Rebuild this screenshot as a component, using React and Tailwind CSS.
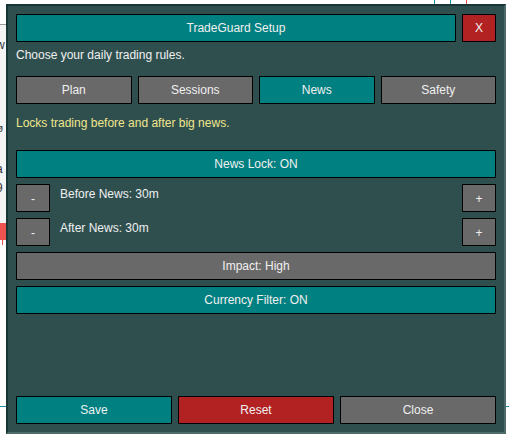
import React from 'react';

const font = { fontFamily: '"Liberation Sans", Arial, sans-serif' };

function Btn({ children, className = '' }) {
  return (
    <div
      className={`flex items-center justify-center border border-black text-[12px] text-[#f0f0f0] ${className}`}
    >
      {children}
    </div>
  );
}

function Stepper({ label }) {
  return (
    <div className="flex h-[28px] items-start">
      <Btn className="h-[28px] w-[34px] bg-[#696969] pt-[2px] text-[11px]">-</Btn>
      <span className="ml-[10px] flex-1 pt-[2px] text-[12px] leading-[16px] text-[#f0f0f0]">{label}</span>
      <Btn className="h-[28px] w-[34px] bg-[#696969] pt-[2px] text-[11px]">+</Btn>
    </div>
  );
}

export default function App() {
  const tabs = ['Plan', 'Sessions', 'News', 'Safety'];

  return (
    <div className="relative h-[440px] w-[509px] overflow-hidden bg-white" style={font}>
      {/* chart bits peeking out behind the panel */}
      <div className="absolute left-0 top-[24px] h-[199px] w-[6px] border-t border-[#9a9a9a] bg-[#f4f4f4]" />
      <span className="absolute left-[-4px] top-[36px] text-[12px] text-[#333]">w</span>
      <span className="absolute left-[-3px] top-[121px] text-[10px] text-[#333]">ø</span>
      <span className="absolute left-[-4px] top-[160px] text-[12px] text-[#333]">a</span>
      <span className="absolute left-[-4px] top-[179px] text-[12px] text-[#333]">9</span>
      <div className="absolute left-0 top-[223px] h-[17px] w-[6px] bg-[#ef5350]" />
      <div className="absolute left-[2px] top-[240px] h-[5px] w-px bg-[#ef5350]" />
      <div className="absolute left-0 top-[406px] h-px w-[6px] bg-[#1c8ea8]" />
      <div className="absolute right-0 top-[406px] h-px w-[4px] bg-[#1c8ea8]" />
      <div className="absolute left-[434px] top-0 h-[4px] w-px bg-[#1c8ea8]" />
      <div className="absolute left-[450px] top-0 h-[4px] w-px bg-[#1c8ea8]" />
      <div className="absolute left-[466px] top-0 h-[4px] w-px bg-[#ef5350]" />

      {/* panel */}
      <div className="absolute left-[6px] top-[4px] flex h-[430px] w-[500px] flex-col border-2 border-b-[#4d6b6b] border-l-[#173636] border-r-[#4d6b6b] border-t-[#173636] bg-[#2f4f4f] p-[8px]">
        <div className="flex h-[28px] gap-[6px]">
          <Btn className="flex-1 bg-[#008080]">TradeGuard Setup</Btn>
          <Btn className="w-[34px] bg-[#b22222]">X</Btn>
        </div>

        <p className="mt-[5px] text-[12px] leading-[16px] text-[#f0f0f0]">Choose your daily trading rules.</p>

        <div className="mt-[13px] grid h-[28px] grid-cols-4 gap-[6px]">
          {tabs.map((t) => (
            <Btn key={t} className={t === 'News' ? 'bg-[#008080]' : 'bg-[#696969]'}>
              {t}
            </Btn>
          ))}
        </div>

        <p className="mt-[11px] text-[12px] leading-[16px] text-[#f0e68c]">Locks trading before and after big news.</p>

        <div className="mt-[19px] flex flex-col gap-[6px]">
          <Btn className="h-[28px] bg-[#008080]">News Lock: ON</Btn>
          <Stepper label="Before News: 30m" />
          <Stepper label="After News: 30m" />
          <Btn className="h-[28px] bg-[#696969]">Impact: High</Btn>
          <Btn className="h-[28px] bg-[#008080]">Currency Filter: ON</Btn>
        </div>

        <div className="mt-auto grid h-[28px] grid-cols-3 gap-[6px]">
          <Btn className="bg-[#008080]">Save</Btn>
          <Btn className="bg-[#b22222]">Reset</Btn>
          <Btn className="bg-[#696969]">Close</Btn>
        </div>
      </div>
    </div>
  );
}
